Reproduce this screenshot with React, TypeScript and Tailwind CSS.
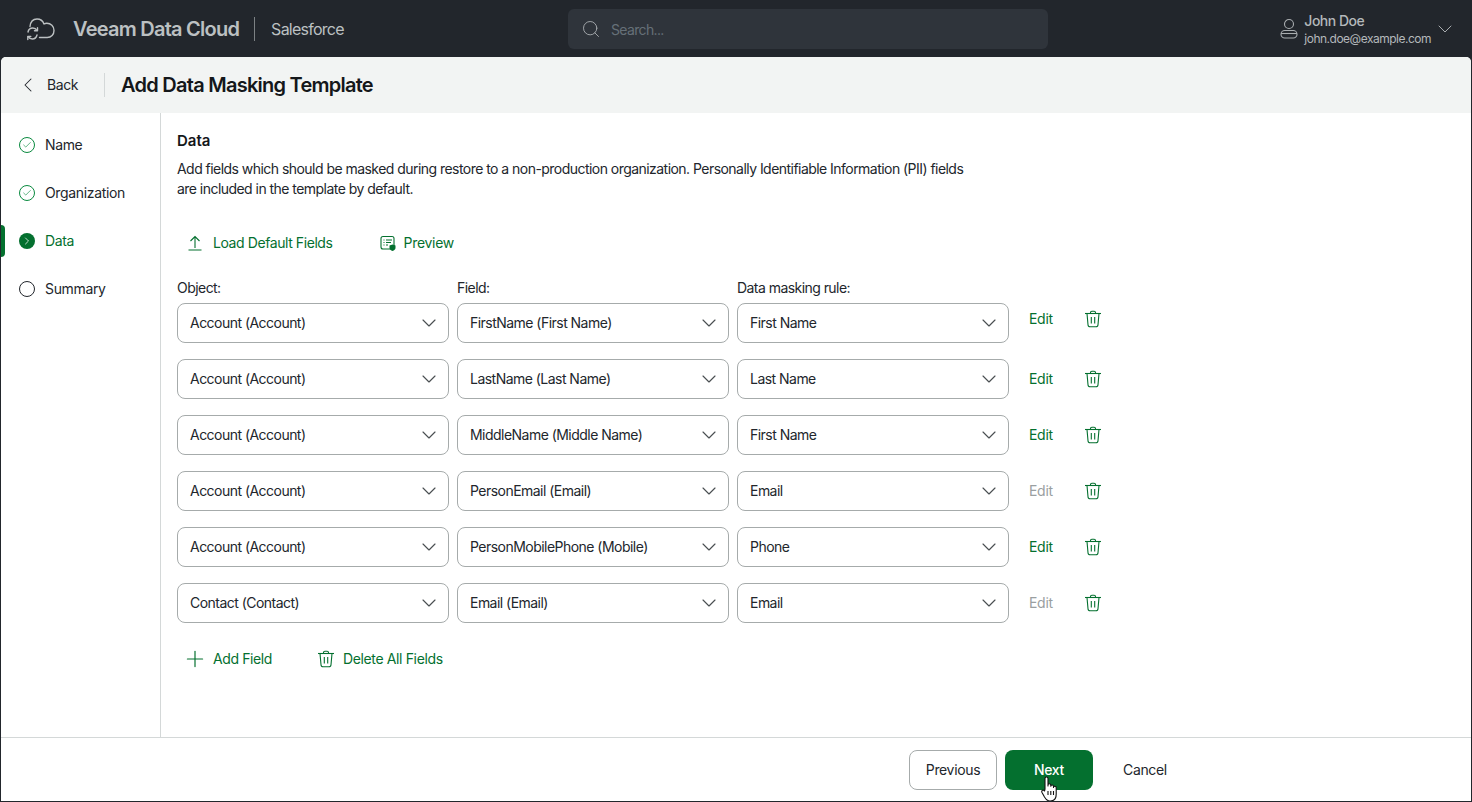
import { ChevronDown, ChevronLeft, ChevronRight, Check, Plus, Search } from 'lucide-react';

const rows = [
  { object: 'Account (Account)', field: 'FirstName (First Name)', rule: 'First Name', editable: true },
  { object: 'Account (Account)', field: 'LastName (Last Name)', rule: 'Last Name', editable: true },
  { object: 'Account (Account)', field: 'MiddleName (Middle Name)', rule: 'First Name', editable: true },
  { object: 'Account (Account)', field: 'PersonEmail (Email)', rule: 'Email', editable: false },
  { object: 'Account (Account)', field: 'PersonMobilePhone (Mobile)', rule: 'Phone', editable: true },
  { object: 'Contact (Contact)', field: 'Email (Email)', rule: 'Email', editable: false },
];

function TrashIcon() {
  return (
    <svg width="18" height="18" viewBox="0 0 18 18" fill="none" stroke="#04702f" strokeWidth="1.1">
      <path d="M1 3.5h16" />
      <path d="M6.5 3.5V2.6c0-.9.6-1.4 1.4-1.4h2.2c.8 0 1.4.5 1.4 1.4v.9" />
      <path d="M3 3.5l1 11.2c.1 1.3.9 2.1 2.2 2.1h5.6c1.3 0 2.1-.8 2.2-2.1l1-11.2" />
      <path d="M7.3 7v6.5M10.7 7v6.5" />
    </svg>
  );
}

function SelectBox({ value }: { value: string }) {
  return (
    <div className="flex h-10 w-[272px] items-center justify-between rounded-lg border border-[#a6abab] bg-white pl-3 pr-[7px] text-sm tracking-[-0.53px] text-[#22262c]">
      <span>{value}</span>
      <ChevronDown className="h-6 w-6 text-[#4a4f52]" strokeWidth={1.15} />
    </div>
  );
}

function StepItem({ label, state }: { label: string; state: 'done' | 'active' | 'todo' }) {
  return (
    <div className="relative flex h-12 items-center pl-[18px]">
      {state === 'active' && <div className="absolute left-0 top-2 h-8 w-1 rounded-r bg-[#04702f]" />}
      {state === 'done' && (
        <div className="flex h-4 w-4 items-center justify-center rounded-full border border-[#0a8a3f]">
          <Check className="h-2.5 w-2.5 text-[#0a8a3f]" strokeWidth={1.5} />
        </div>
      )}
      {state === 'active' && (
        <div className="flex h-4 w-4 items-center justify-center rounded-full bg-[#04702f]">
          <ChevronRight className="h-3 w-3 text-white" strokeWidth={1.5} />
        </div>
      )}
      {state === 'todo' && <div className="h-4 w-4 rounded-full border border-[#22262c]" />}
      <span className={`ml-[10px] text-sm tracking-[-0.35px] ${state === 'active' ? 'text-[#04702f]' : 'text-[#22262c]'}`}>{label}</span>
    </div>
  );
}

export default function App() {
  return (
    <div className="flex h-[802px] w-[1472px] flex-col overflow-hidden bg-[#22262c] font-['Inter',sans-serif]">
      {/* Top bar */}
      <header className="relative flex h-[57px] shrink-0 items-center pl-[26px] pr-[15px]">
        <svg width="30" height="24" viewBox="0 0 30 24" fill="none" stroke="#bcc0c2" strokeWidth="1.4" strokeLinecap="round" strokeLinejoin="round">
          <path d="M4 9.5C4.5 5 7 2 11 2c3.6 0 6 2.2 7 5 .9-.5 1.8-.7 2.8-.7 4 0 7.2 3 7.2 7.200 0 4-2.800 7-6.800 7H13.500" />
          <path d="M2 15c.5-2.600 2.600-4 4.800-4 1.800 0 3.300.8 4.200 2.300" />
          <path d="M11.500 10.800V13.800H8.500" />
          <path d="M11 18c-.6 2.400-2.500 4-4.700 4-1.800 0-3.200-.8-4.100-2.300" />
          <path d="M1.800 22.500v-3h3" />
        </svg>
        <span className="ml-[17px] text-[20px] font-semibold tracking-[-0.76px] text-[#bcc0c2]">Veeam Data Cloud</span>
        <div className="ml-[15px] h-6 w-px bg-[#7c8184]" />
        <span className="ml-4 text-base tracking-[-0.75px] text-[#bcc0c2]">Salesforce</span>

        <div className="absolute left-[568px] top-[9px] flex h-10 w-[480px] items-center rounded-md bg-[#2f343b] pl-[13px]">
          <Search className="h-5 w-5 text-[#a9adb0]" strokeWidth={1.1} />
          <span className="ml-[10px] mt-[2px] text-sm tracking-[-0.65px] text-[#667078]">Search...</span>
        </div>

        <div className="ml-auto flex items-center">
          <svg className="-ml-px" width="18" height="22" viewBox="0 0 18 22" fill="none" stroke="#a9adb0" strokeWidth="1.1">
            <circle cx="9" cy="6" r="4.500" />
            <rect x="1" y="12.500" width="16" height="7.500" rx="3.700" />
            <path d="M1 15.500h16" />
          </svg>
          <div className="ml-[6px] mt-[2px] flex flex-col tracking-[-0.5px]">
            <span className="text-sm leading-[18px] font-medium text-[#b4b8bb]">John Doe</span>
            <span className="text-xs leading-[18px] text-[#b4b8bb]">john.doe@example.com</span>
          </div>
          <ChevronDown className="ml-[2px] h-6 w-6 text-[#a9adb0]" strokeWidth={1} />
        </div>
      </header>

      {/* Panel */}
      <div className="mx-px mb-px flex min-h-0 flex-1 flex-col overflow-hidden rounded-t-[5px] bg-white">
        <div className="flex h-14 shrink-0 items-center bg-[#f2f4f3]">
          <ChevronLeft className="ml-[15px] h-6 w-6 text-[#22262c]" strokeWidth={1.05} />
          <span className="ml-[7px] text-sm tracking-[-0.4px] text-[#22262c]">Back</span>
          <div className="ml-[26px] h-6 w-px bg-[#d4d8d8]" />
          <h1 className="ml-4 text-[20px] font-semibold tracking-[-0.75px] text-[#14171a]">Add Data Masking Template</h1>
        </div>

        <div className="flex min-h-0 flex-1">
          <nav className="w-40 shrink-0 border-r border-[#d4d8d8] pt-2">
            <StepItem label="Name" state="done" />
            <StepItem label="Organization" state="done" />
            <StepItem label="Data" state="active" />
            <StepItem label="Summary" state="todo" />
          </nav>

          <main className="flex-1 pl-4 pt-[18px]">
            <h2 className="text-[15px] leading-5 font-semibold text-[#14171a]">Data</h2>
            <p className="mt-[8px] w-[790px] text-sm leading-5 tracking-[-0.54px] text-[#22262c]">
              Add fields which should be masked during restore to a non-production organization. Personally Identifiable Information (PII) fields are included in the template by default.
            </p>

            <div className="mt-[24px] flex h-10 items-center text-sm tracking-[-0.42px] text-[#04702f]">
              <svg className="ml-[11px]" width="14" height="16" viewBox="0 0 14 16" fill="none" stroke="#04702f" strokeWidth="1.100">
                <path d="M7 13V1.500M2.500 6L7 1.500 11.500 6M0.500 15h13" />
              </svg>
              <span className="ml-[11px]">Load Default Fields</span>
              <svg className="ml-[47px]" width="16" height="16" viewBox="0 0 16 16" fill="none" stroke="#04702f" strokeWidth="1.100">
                <rect x="1" y="1.500" width="13" height="12.500" rx="2" />
                <path d="M3.500 5h1M6 5h6M3.500 7.500h1M6 7.500h5M3.500 10h1M6 10h2" />
                <path d="M9.500 10.500l3-1 3 1v2.500c0 1.400-1.300 2.300-3 3-1.700-.7-3-1.600-3-3z" fill="#04702f" stroke="none" />
              </svg>
              <span className="ml-2 tracking-[-0.3px]">Preview</span>
            </div>

            <div className="mt-[15px] flex gap-2 text-sm leading-5 tracking-[-0.55px] text-[#22262c]">
              <span className="w-[272px]">Object:</span>
              <span className="w-[272px]">Field:</span>
              <span className="w-[272px]">Data masking rule:</span>
            </div>

            <div className="mt-[5px] flex flex-col gap-4">
              {rows.map((row, i) => (
                <div key={i} className={`flex gap-2 ${i === 0 ? 'items-start' : 'items-center'}`}>
                  <SelectBox value={row.object} />
                  <SelectBox value={row.field} />
                  <SelectBox value={row.rule} />
                  <span className={`ml-3 w-[47px] text-sm leading-5 tracking-[-0.3px] ${i === 0 ? 'mt-[6px]' : ''} ${row.editable ? 'text-[#04702f]' : 'text-[#9a9fa1]'}`}>Edit</span>
                  <span className={i === 0 ? 'mt-[7px]' : ''}><TrashIcon /></span>
                </div>
              ))}
            </div>

            <div className="mt-4 flex h-10 items-center text-sm tracking-[-0.4px] text-[#04702f]">
              <Plus className="ml-[5px] h-[26px] w-[26px]" strokeWidth={1.1} />
              <span className="ml-[5px]">Add Field</span>
              <span className="ml-[45px]"><TrashIcon /></span>
              <span className="ml-2 tracking-[-0.36px]">Delete All Fields</span>
            </div>
          </main>
        </div>

        <footer className="relative flex h-[64px] shrink-0 items-center border-t border-[#d4d8d8] pl-[908px] text-sm tracking-[-0.35px]">
          <button className="h-10 w-[88px] rounded-lg border border-[#a6abab] bg-white text-[#22262c]">Previous</button>
          <button className="ml-2 h-10 w-[88px] rounded-lg bg-[#04702f] font-medium text-white">Next</button>
          <span className="ml-[30px] text-[#22262c]">Cancel</span>
          <svg className="absolute left-[1038px] top-[38px]" width="22" height="26" viewBox="0 0 22 26" fill="white" stroke="#111" strokeWidth="1.100" strokeLinejoin="round">
            <path d="M6 13V2.500c0-2 3-2 3 0V10l0-1c0-1.700 2.800-1.700 2.800 0v1.200c0-1.600 2.700-1.600 2.700 0v1.200c0-1.500 2.700-1.500 2.700.2V18c0 4-2 7-6 7H11c-3 0-4-1.500-5.500-4L3 16.500c-1-2 1.500-3.300 2.500-1.500z" />
            <path d="M9 15v4M11.800 15v4M14.500 15v4" fill="none" />
          </svg>
        </footer>
      </div>
    </div>
  );
}
